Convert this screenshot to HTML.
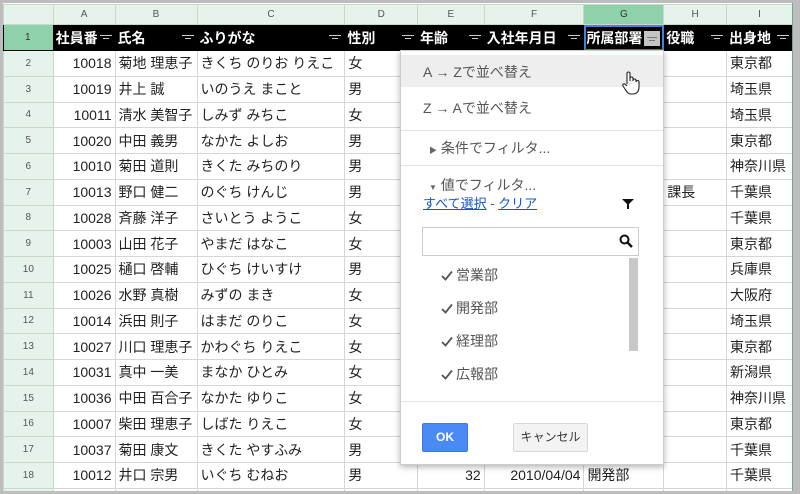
<!DOCTYPE html>
<html><head><meta charset="utf-8"><style>
*{margin:0;padding:0;box-sizing:border-box}
body{width:800px;height:494px;overflow:hidden;background:#bdbdbd;font-family:"Liberation Sans","Noto Sans CJK JP",sans-serif;position:relative}
#sheet{position:absolute;left:3px;top:3px;width:790px;height:488px;background:#fff;overflow:hidden}
table{border-collapse:collapse;table-layout:fixed;position:absolute;left:0;top:1px}
td{border:1px solid #d6d6d6;font-size:14px;color:#222;white-space:nowrap;overflow:hidden;padding:0 3px;height:25.75px}
tr.ch td{height:20px;background:#e6f3ea;color:#555;font-size:10px;text-align:center;border-color:#c8d8cc}
tr.ch td.sel{background:#8fd1aa;color:#333}
td.rn{background:#e6f3ea;color:#555;font-size:10px;text-align:center;border-color:#c8d8cc}
tr.h td{height:26px;background:#000;color:#fff;font-weight:bold;font-size:14px;border-color:#000;position:relative;padding-left:2px}
tr.h td.rn{background:#8fd1aa;color:#333;font-weight:normal;font-size:10px}
.f{position:absolute;right:3px;top:8px;width:12px;height:10px}
.f:before,.f:after{content:"";position:absolute;left:0;right:0;height:1px;background:#ccc}
.f:before{top:2px}.f:after{top:5px;left:3px;right:3px}
td.r{text-align:right}
#menu{position:absolute;left:400px;top:50px;width:264px;height:415px;background:#fff;border:1px solid #ccc;box-shadow:0 2px 6px rgba(0,0,0,.3);font-size:14px;color:#555}
.it{position:absolute;left:0;right:0;padding-left:22px}
.sep{position:absolute;left:0;right:0;height:1px;background:#e4e4e4}
a{color:#15c;text-decoration:underline}
.chk{position:absolute;left:40px;font-size:14px;color:#555}
.chk svg{vertical-align:-1px;margin-right:3px}
</style></head><body>
<div id="sheet">
<table>
<colgroup><col style="width:50px"><col style="width:62px"><col style="width:82px"><col style="width:148px"><col style="width:73px"><col style="width:67px"><col style="width:100px"><col style="width:80px"><col style="width:63px"><col style="width:66px"></colgroup>
<tr class="ch"><td></td><td>A</td><td>B</td><td>C</td><td>D</td><td>E</td><td>F</td><td class="sel">G</td><td>H</td><td>I</td></tr>
<tr class="h"><td class="rn">1</td><td>社員番<span class="f"></span></td><td>氏名<span class="f"></span></td><td>ふりがな<span class="f"></span></td><td>性別<span class="f"></span></td><td>年齢<span class="f"></span></td><td>入社年月日<span class="f"></span></td><td style="outline:2px solid #4a7fe0;outline-offset:-2px">所属部署<span style="position:absolute;right:3px;top:6px;width:16px;height:15px;background:#c4c4c4"><span style="position:absolute;left:3px;top:6px;width:10px;height:1px;background:#777"></span><span style="position:absolute;left:5px;top:9px;width:6px;height:1px;background:#777"></span></span></td><td>役職<span class="f"></span></td><td>出身地<span class="f"></span></td></tr>
<tr><td class="rn">2</td><td class="r">10018</td><td>菊地 理恵子</td><td>きくち のりお りえこ</td><td>女</td><td></td><td></td><td></td><td></td><td>東京都</td></tr>
<tr><td class="rn">3</td><td class="r">10019</td><td>井上 誠</td><td>いのうえ まこと</td><td>男</td><td></td><td></td><td></td><td></td><td>埼玉県</td></tr>
<tr><td class="rn">4</td><td class="r">10011</td><td>清水 美智子</td><td>しみず みちこ</td><td>女</td><td></td><td></td><td></td><td></td><td>埼玉県</td></tr>
<tr><td class="rn">5</td><td class="r">10020</td><td>中田 義男</td><td>なかた よしお</td><td>男</td><td></td><td></td><td></td><td></td><td>東京都</td></tr>
<tr><td class="rn">6</td><td class="r">10010</td><td>菊田 道則</td><td>きくた みちのり</td><td>男</td><td></td><td></td><td></td><td></td><td>神奈川県</td></tr>
<tr><td class="rn">7</td><td class="r">10013</td><td>野口 健二</td><td>のぐち けんじ</td><td>男</td><td></td><td></td><td></td><td>課長</td><td>千葉県</td></tr>
<tr><td class="rn">8</td><td class="r">10028</td><td>斉藤 洋子</td><td>さいとう ようこ</td><td>女</td><td></td><td></td><td></td><td></td><td>千葉県</td></tr>
<tr><td class="rn">9</td><td class="r">10003</td><td>山田 花子</td><td>やまだ はなこ</td><td>女</td><td></td><td></td><td></td><td></td><td>東京都</td></tr>
<tr><td class="rn">10</td><td class="r">10025</td><td>樋口 啓輔</td><td>ひぐち けいすけ</td><td>男</td><td></td><td></td><td></td><td></td><td>兵庫県</td></tr>
<tr><td class="rn">11</td><td class="r">10026</td><td>水野 真樹</td><td>みずの まき</td><td>女</td><td></td><td></td><td></td><td></td><td>大阪府</td></tr>
<tr><td class="rn">12</td><td class="r">10014</td><td>浜田 則子</td><td>はまだ のりこ</td><td>女</td><td></td><td></td><td></td><td></td><td>埼玉県</td></tr>
<tr><td class="rn">13</td><td class="r">10027</td><td>川口 理恵子</td><td>かわぐち りえこ</td><td>女</td><td></td><td></td><td></td><td></td><td>東京都</td></tr>
<tr><td class="rn">14</td><td class="r">10031</td><td>真中 一美</td><td>まなか ひとみ</td><td>女</td><td></td><td></td><td></td><td></td><td>新潟県</td></tr>
<tr><td class="rn">15</td><td class="r">10036</td><td>中田 百合子</td><td>なかた ゆりこ</td><td>女</td><td></td><td></td><td></td><td></td><td>神奈川県</td></tr>
<tr><td class="rn">16</td><td class="r">10007</td><td>柴田 理恵子</td><td>しばた りえこ</td><td>女</td><td></td><td></td><td></td><td></td><td>東京都</td></tr>
<tr><td class="rn">17</td><td class="r">10037</td><td>菊田 康文</td><td>きくた やすふみ</td><td>男</td><td></td><td></td><td></td><td></td><td>千葉県</td></tr>
<tr><td class="rn">18</td><td class="r">10012</td><td>井口 宗男</td><td>いぐち むねお</td><td>男</td><td class="r">32</td><td class="r">2010/04/04</td><td>開発部</td><td></td><td>千葉県</td></tr>
<tr><td class="rn"></td><td></td><td></td><td></td><td></td><td></td><td></td><td></td><td></td><td></td></tr>
</table>
<div style="position:absolute;left:789px;top:0;width:1px;height:488px;background:#6a9"></div>
</div>
<div id="menu">
<div style="position:absolute;left:0;right:0;top:4px;height:32px;background:#eee"></div>
<div class="it" style="top:11px">A → Zで並べ替え</div>
<div class="it" style="top:47px">Z → Aで並べ替え</div>
<div class="sep" style="top:79px"></div>
<div class="it" style="top:87px;padding-left:28px"><span style="font-size:8px;color:#666">▶</span> 条件でフィルタ...</div>
<div class="sep" style="top:114px"></div>
<div class="it" style="top:124px;padding-left:28px"><span style="font-size:8px;color:#666">▼</span> 値でフィルタ...</div>
<div class="it" style="top:142px;font-size:13px"><a>すべて選択</a> - <a>クリア</a></div>
<svg style="position:absolute;left:220px;top:147px" width="14" height="12"><path d="M1 1H13L8 6V11H6V6Z" fill="#111"/></svg>
<div style="position:absolute;left:21px;top:176px;width:217px;height:29px;border:1px solid #ccc"></div>
<svg style="position:absolute;left:218px;top:183px" width="14" height="14"><circle cx="5.5" cy="5.5" r="4" fill="none" stroke="#111" stroke-width="2"/><path d="M8.5 8.5L13 13" stroke="#111" stroke-width="2.4"/></svg>
<div style="position:absolute;left:228px;top:207px;width:9px;height:93px;background:#c8c8c8"></div>
<div class="chk" style="top:214px"><svg width="12" height="11"><path d="M1 6L4.5 9.5L11 1.5" fill="none" stroke="#555" stroke-width="1.8"/></svg>営業部</div>
<div class="chk" style="top:247px"><svg width="12" height="11"><path d="M1 6L4.5 9.5L11 1.5" fill="none" stroke="#555" stroke-width="1.8"/></svg>開発部</div>
<div class="chk" style="top:280px"><svg width="12" height="11"><path d="M1 6L4.5 9.5L11 1.5" fill="none" stroke="#555" stroke-width="1.8"/></svg>経理部</div>
<div class="chk" style="top:313px"><svg width="12" height="11"><path d="M1 6L4.5 9.5L11 1.5" fill="none" stroke="#555" stroke-width="1.8"/></svg>広報部</div>
<div class="sep" style="top:350px"></div>
<div style="position:absolute;left:21px;top:372px;width:46px;height:29px;background:#4a8af4;border:1px solid #3b78e7;border-radius:2px;color:#fff;font-weight:bold;font-size:12px;text-align:center;line-height:27px">OK</div>
<div style="position:absolute;left:112px;top:372px;width:75px;height:29px;background:#f3f3f3;border:1px solid #d8d8d8;border-radius:2px;color:#333;font-size:12px;text-align:center;line-height:27px">キャンセル</div>
</div>
<svg style="position:absolute;left:621px;top:70px" width="20" height="26"><path d="M6 14V3.5a1.5 1.5 0 0 1 3 0V11M9 10V8.5a1.5 1.5 0 0 1 3 0V11M12 10.5a1.5 1.5 0 0 1 3 0V12M15 12a1.5 1.5 0 0 1 3 0v5c0 4-2 7-6 7h-2c-3 0-4-2-6-5l-2-3c-1-1.5 1-3 2.5-1.5L6 16" fill="#fff" stroke="#222" stroke-width="1.1"/></svg>
</body></html>
